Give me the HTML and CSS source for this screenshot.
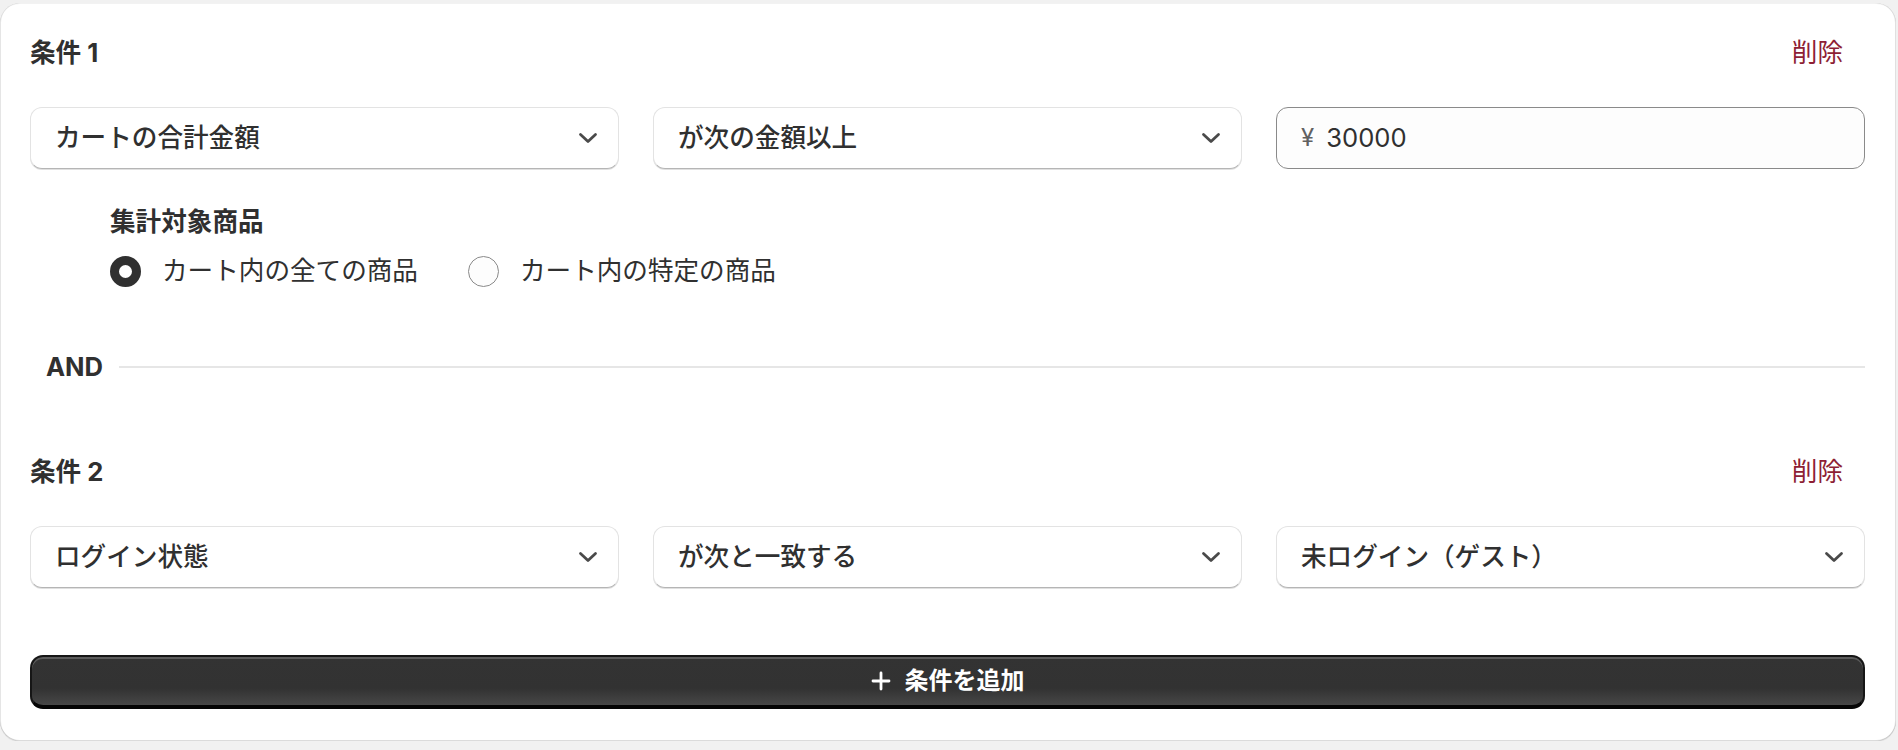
FILE: index.html
```html
<!DOCTYPE html>
<html lang="ja">
<head>
<meta charset="utf-8">
<title>条件</title>
<link rel="stylesheet" href="styles.css">
</head>
<body>
<div class="card">
  <section class="condition">
    <div class="cond-head">
      <h3 class="cond-title">条件 1</h3>
      <button class="delete" type="button">削除</button>
    </div>
    <div class="fields">
      <div class="select"><span class="select-text">カートの合計金額</span><svg class="chev" viewBox="0 0 20 12" width="20" height="12"><path d="M2.5 2.5 L10 9.5 L17.5 2.5" fill="none" stroke="#4a4a4a" stroke-width="2.8" stroke-linecap="round" stroke-linejoin="round"/></svg></div>
      <div class="select"><span class="select-text">が次の金額以上</span><svg class="chev" viewBox="0 0 20 12" width="20" height="12"><path d="M2.5 2.5 L10 9.5 L17.5 2.5" fill="none" stroke="#4a4a4a" stroke-width="2.8" stroke-linecap="round" stroke-linejoin="round"/></svg></div>
      <label class="textfield"><span class="prefix">¥</span><input class="tf-input" type="text" value="30000"></label>
    </div>
    <div class="scope">
      <div class="scope-label">集計対象商品</div>
      <div class="radios">
        <label class="radio-item"><span class="radio radio-checked"></span><span class="radio-text">カート内の全ての商品</span></label>
        <label class="radio-item"><span class="radio"></span><span class="radio-text">カート内の特定の商品</span></label>
      </div>
    </div>
  </section>

  <div class="and-row"><span class="and">AND</span><span class="and-line"></span></div>

  <section class="condition">
    <div class="cond-head">
      <h3 class="cond-title">条件 2</h3>
      <button class="delete" type="button">削除</button>
    </div>
    <div class="fields">
      <div class="select"><span class="select-text">ログイン状態</span><svg class="chev" viewBox="0 0 20 12" width="20" height="12"><path d="M2.5 2.5 L10 9.5 L17.5 2.5" fill="none" stroke="#4a4a4a" stroke-width="2.8" stroke-linecap="round" stroke-linejoin="round"/></svg></div>
      <div class="select"><span class="select-text">が次と一致する</span><svg class="chev" viewBox="0 0 20 12" width="20" height="12"><path d="M2.5 2.5 L10 9.5 L17.5 2.5" fill="none" stroke="#4a4a4a" stroke-width="2.8" stroke-linecap="round" stroke-linejoin="round"/></svg></div>
      <div class="select"><span class="select-text">未ログイン（ゲスト）</span><svg class="chev" viewBox="0 0 20 12" width="20" height="12"><path d="M2.5 2.5 L10 9.5 L17.5 2.5" fill="none" stroke="#4a4a4a" stroke-width="2.8" stroke-linecap="round" stroke-linejoin="round"/></svg></div>
    </div>
  </section>

  <button class="add-btn" type="button"><svg class="plus" viewBox="0 0 20 20" width="20" height="20"><path d="M10 2 V18 M2 10 H18" stroke="#ffffff" stroke-width="2.8" stroke-linecap="round"/></svg><span>条件を追加</span></button>
</div>
</body>
</html>
```

FILE: styles.css
```css
* { box-sizing: border-box; }

html, body {
  margin: 0;
  padding: 0;
  background: #f1f1f1;
}

body {
  padding-top: 3px;
  font-family: Inter, "Noto Sans CJK JP", sans-serif;
  color: #303030;
  font-size: 25.6px;
}

.card {
  width: 1896px;
  background: #ffffff;
  border-radius: 20px;
  padding: 32px 31px 32px 30px;
  box-shadow: 0 1px 0 rgba(26, 26, 26, 0.08),
              inset 0 -1px 0 rgba(0, 0, 0, 0.14),
              inset -1px 0 0 rgba(0, 0, 0, 0.12),
              inset 1px 0 0 rgba(0, 0, 0, 0.10),
              inset 0 1px 0 rgba(0, 0, 0, 0.05);
}

.cond-head {
  display: flex;
  align-items: center;
  justify-content: space-between;
  height: 36px;
  margin-bottom: 36px;
}

.cond-title {
  margin: 0;
  font-size: 25.6px;
  font-weight: 700;
  line-height: 36px;
}

.delete {
  border: 0;
  background: none;
  padding: 0 22px 0 0;
  font: inherit;
  font-size: 25.6px;
  line-height: 36px;
  color: #8e1f35;
  cursor: pointer;
}

.fields {
  display: grid;
  grid-template-columns: 1fr 1fr 1fr;
  column-gap: 34px;
}

.select {
  height: 62px;
  display: flex;
  align-items: center;
  justify-content: space-between;
  padding: 0 20px 0 24px;
  background: #ffffff;
  border: 1px solid #e3e3e3;
  border-bottom: 1px solid #b5b5b5;
  border-radius: 12px;
  box-shadow: 0 1px 0 rgba(0, 0, 0, 0.12);
}

.select-text {
  font-weight: 500;
  line-height: 36px;
  white-space: nowrap;
}

.chev { display: block; }

.textfield {
  height: 62px;
  display: flex;
  align-items: center;
  padding: 0 20px 0 24px;
  background: #fdfdfd;
  border: 1px solid #8a8a8a;
  border-radius: 12px;
}

.prefix {
  color: #616161;
  font-size: 24px;
  margin-right: 12px;
  line-height: 36px;
}

.tf-input {
  flex: 1;
  border: 0;
  outline: none;
  background: transparent;
  font: inherit;
  font-size: 25.6px;
  color: #303030;
  padding: 0;
  line-height: 36px;
}

.scope {
  padding-left: 80px;
  margin-top: 37px;
}

.scope-label {
  font-weight: 700;
  line-height: 32px;
}

.radios {
  display: flex;
  align-items: center;
  gap: 50px;
  margin-top: 17px;
}

.radio-item {
  display: flex;
  align-items: center;
  gap: 21px;
  line-height: 32px;
}

.radio {
  width: 31px;
  height: 31px;
  border-radius: 50%;
  border: 1.5px solid #8a8a8a;
  background: #fdfdfd;
  flex: none;
}

.radio-checked {
  border: 9px solid #303030;
  background: #ffffff;
}

.radio-text {
  font-weight: 400;
}

.and-row {
  display: flex;
  align-items: center;
  gap: 16px;
  height: 36px;
  margin: 62px 0 69px;
  padding-left: 16px;
}

.and {
  font-weight: 700;
  font-size: 25.6px;
  line-height: 36px;
}

.and-line {
  flex: 1;
  height: 2px;
  background: #e6e6e6;
}

.add-btn {
  margin-top: 67px;
  width: 100%;
  height: 54px;
  display: flex;
  align-items: center;
  justify-content: center;
  gap: 14px;
  border: 2px solid #161616;
  border-bottom-width: 4px;
  border-bottom-color: #050505;
  border-radius: 13px;
  background: linear-gradient(to bottom, #333333 0%, #323232 65%, #474747 100%);
  box-shadow: inset 0 2px 0 #5c5c5c;
  color: #ffffff;
  font-family: Inter, "Noto Sans CJK JP", sans-serif;
  font-size: 24px;
  font-weight: 600;
  line-height: 32px;
  cursor: pointer;
}

.plus { display: block; }
```
